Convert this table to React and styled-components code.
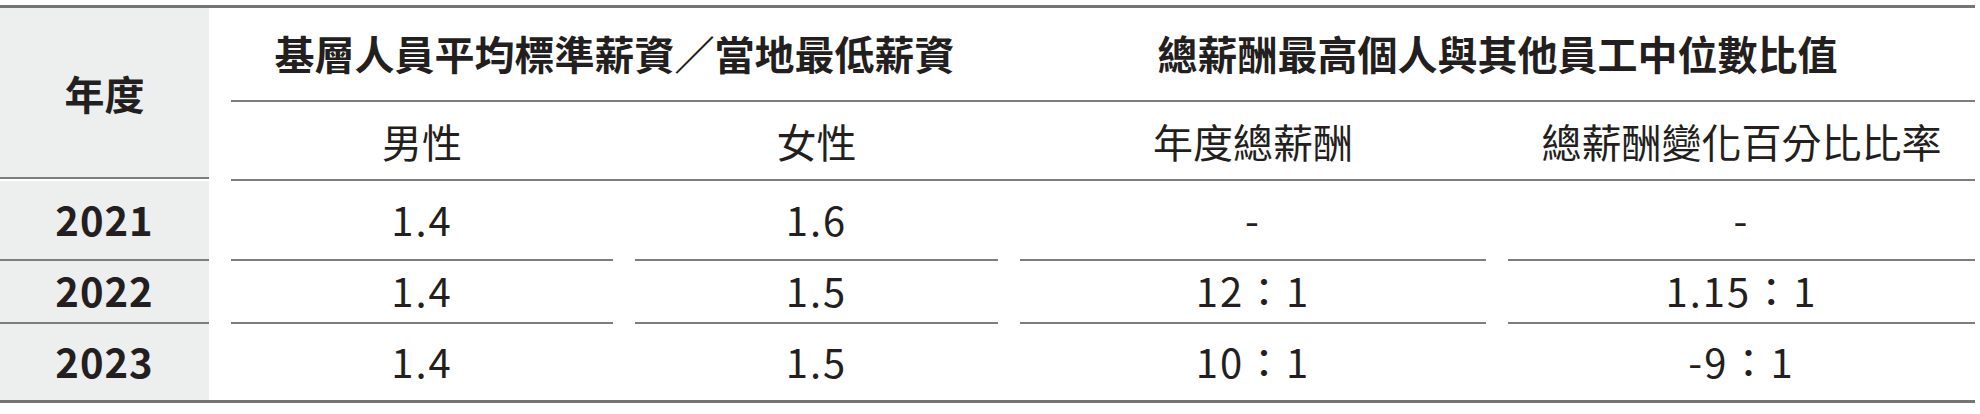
import React from 'react';
import styled, { createGlobalStyle } from 'styled-components';

const GlobalStyle = createGlobalStyle`
  html, body {
    margin: 0;
    padding: 0;
    background: #fff;
  }
  body {
    font-family: "Noto Sans CJK TC", "Noto Sans", sans-serif;
    color: #231f20;
  }
`;

const LINE = '#7d7d7d';
const COLS = '382px 363px 466px 467px';

const Page = styled.div`
  padding-top: 5px;
  width: 1980px;
`;

const Table = styled.div`
  width: 1975px;
  border-top: 3px solid #747474;
  border-bottom: 3px solid #747474;
  display: grid;
  grid-template-columns: 209px 1fr;
  grid-template-rows: 92px 2px 77px 2px;
  column-gap: 22px;
`;

const YearHead = styled.div`
  grid-column: 1;
  grid-row: 1 / 4;
  background: #edeeee;
  border-bottom: 2px solid ${LINE};
  display: flex;
  align-items: center;
  justify-content: center;
  font-size: 40px;
  font-weight: 700;
  line-height: 1;
`;

const Band = styled.div`
  grid-column: 2;
  display: grid;
  grid-template-columns: ${(p) => p.$cols};
  column-gap: 22px;
  border-bottom: 2px solid ${LINE};
  grid-row: ${(p) => p.$row};
`;

const HeadCell = styled.div`
  display: flex;
  align-items: center;
  justify-content: center;
  font-size: 40px;
  font-weight: ${(p) => (p.$bold ? 700 : 400)};
  line-height: 1;
  white-space: nowrap;
  padding-bottom: ${(p) => (p.$bold ? '2px' : '0')};
`;

const Body = styled.div`
  grid-column: 1 / -1;
  display: grid;
  grid-template-columns: 209px ${COLS};
  column-gap: 22px;
`;

const Cell = styled.div`
  height: ${(p) => p.$h}px;
  display: flex;
  align-items: center;
  justify-content: center;
  font-size: 40px;
  line-height: 1;
  letter-spacing: ${(p) => (p.$year ? '1px' : '2px')};
  padding-bottom: 3px;
  box-sizing: border-box;
  font-weight: ${(p) => (p.$year ? 700 : 400)};
  background: ${(p) => (p.$year ? '#edeeee' : 'transparent')};
  border-bottom: ${(p) => (p.$last ? 'none' : `2px solid ${LINE}`)};
  white-space: nowrap;
`;

const rows = [
  { year: '2021', male: '1.4', female: '1.6', total: '-', change: '-', h: 80 },
  { year: '2022', male: '1.4', female: '1.5', total: '12：1', change: '1.15：1', h: 63 },
  { year: '2023', male: '1.4', female: '1.5', total: '10：1', change: '-9：1', h: 76 },
];

export default function App() {
  return (
    <Page>
      <GlobalStyle />
      <Table>
        <YearHead>年度</YearHead>
        <Band $row="1 / 3" $cols="767px 955px">
          <HeadCell $bold>基層人員平均標準薪資／當地最低薪資</HeadCell>
          <HeadCell $bold>總薪酬最高個人與其他員工中位數比值</HeadCell>
        </Band>
        <Band $row="3 / 5" $cols={COLS}>
          <HeadCell>男性</HeadCell>
          <HeadCell>女性</HeadCell>
          <HeadCell>年度總薪酬</HeadCell>
          <HeadCell>總薪酬變化百分比比率</HeadCell>
        </Band>
        <Body>
          {rows.map((r, i) => {
            const last = i === rows.length - 1;
            return (
              <React.Fragment key={r.year}>
                <Cell $year $h={r.h} $last={last}>{r.year}</Cell>
                <Cell $h={r.h} $last={last}>{r.male}</Cell>
                <Cell $h={r.h} $last={last}>{r.female}</Cell>
                <Cell $h={r.h} $last={last}>{r.total}</Cell>
                <Cell $h={r.h} $last={last}>{r.change}</Cell>
              </React.Fragment>
            );
          })}
        </Body>
      </Table>
    </Page>
  );
}
